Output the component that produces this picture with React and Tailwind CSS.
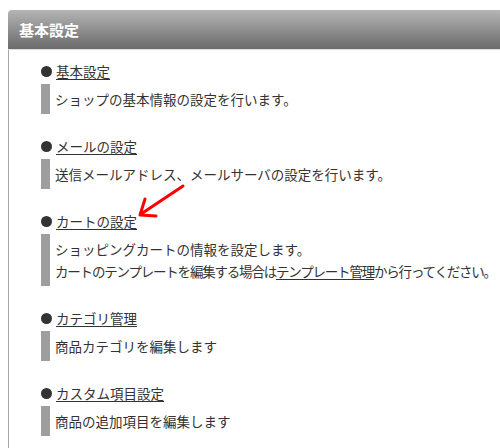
const items = [
  { title: "基本設定", lines: [["ショップの基本情報の設定を行います。"]] },
  { title: "メールの設定", lines: [["送信メールアドレス、メールサーバの設定を行います。"]] },
  {
    title: "カートの設定",
    lines: [
      ["ショッピングカートの情報を設定します。"],
      ["カートのテンプレートを編集する場合は", "テンプレート管理", "から行ってください。"],
    ],
  },
  { title: "カテゴリ管理", lines: [["商品カテゴリを編集します"]] },
  { title: "カスタム項目設定", lines: [["商品の追加項目を編集します"]] },
];

export default function App() {
  return (
    <div
      className="relative w-[500px] h-[448px] overflow-hidden bg-white text-[#333] whitespace-nowrap"
      style={{ fontFamily: '"Noto Sans CJK JP", "Noto Sans", sans-serif' }}
    >
      <div className="ml-[8px] mt-[10px] w-[520px]">
        <div className="h-[40px] rounded-tl-[4px] bg-gradient-to-b from-[#b5b5b5] to-[#6b6b6b] border-b border-[#dcdcdc] flex items-center pl-[11px]">
          <span className="text-white font-bold text-[15px] leading-none">基本設定</span>
        </div>
        <div className="border-l border-[#a8a8a8] pl-[32px] pt-[11px] pb-[20px]">
          {items.map((item, i) => (
            <div key={i} className="mb-[22px]">
              <div className="flex items-center h-[20px] mb-[3px]">
                <span className="w-[11px] h-[11px] rounded-full bg-[#333] mr-[4px]" />
                <a className="text-[13.5px] leading-[20px] underline underline-offset-[2px] text-[#333]">
                  {item.title}
                </a>
              </div>
              <div className="flex">
                <div className="w-[9px] bg-[#9e9e9e] mr-[5px]" />
                <div className="py-[4px] text-[13.5px] leading-[22px]">
                  {item.lines.map((parts, j) =>
                    parts.length === 1 ? (
                      <div key={j}>{parts[0]}</div>
                    ) : (
                      <div key={j} className="tracking-[-1.2px]">
                        {parts[0]}
                        <a className="underline underline-offset-[2px]">{parts[1]}</a>
                        {parts[2]}
                      </div>
                    )
                  )}
                </div>
              </div>
            </div>
          ))}
        </div>
      </div>

      {/* red annotation arrow */}
      <svg className="absolute left-0 top-0" width="500" height="448" viewBox="0 0 500 448">
        <g stroke="#ff0000" strokeWidth="3" fill="none" strokeLinecap="round" strokeLinejoin="round">
          <line x1="183" y1="186" x2="141" y2="214" />
          <polyline points="145,199 140,215 156,216" />
        </g>
      </svg>
    </div>
  );
}
